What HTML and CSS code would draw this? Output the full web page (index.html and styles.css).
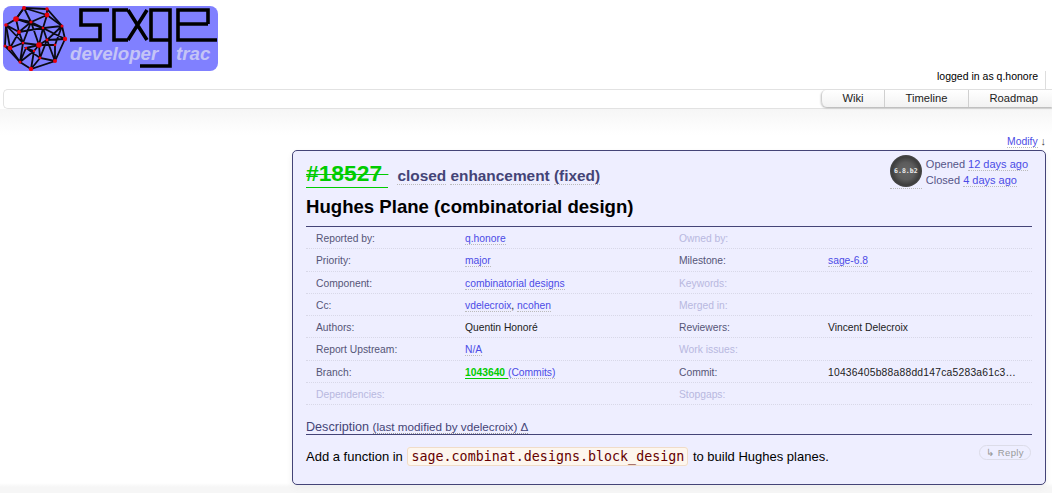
FILE: index.html
```html
<!DOCTYPE html>
<html lang="en">
  <head>
    <meta charset="UTF-8" />
    <title>#18527 (Hughes Plane (combinatorial design)) - Sage Trac</title>
    <link rel="stylesheet" href="styles.css">
  </head>
  <body>
    <div class="banner">
      <div class="logo">
        <svg class="logo-art" width="215" height="65" viewBox="3 6 215 65">
          <g fill="none" stroke="#0a0a14" stroke-width="1.8">
            <path d="M24 8 47 9 62 26 65 39 55 61 31 69 20 62 5 46 6 25 16 19Z" />
            <path d="M24 8 16 19 31 22 47 15 47 9M47 15 62 26 47 40 55 61M65 39 47 40 39 45 40 58 31 69M16 19 19 32 6 25M19 32 31 22 43 28 47 40M19 32 10 48 5 46M10 48 23 43 39 45M23 43 20 62M23 43 19 32M31 22 39 45 26 48 40 58 55 61M40 58 47 40M10 48 20 62 26 48M47 15 43 28 19 32M24 8 31 22M62 26 43 28 65 39M34 51 39 45M34 51 31 69M47 15 62 26M6 25 23 43M16 19 43 28M55 45 39 45M55 45 62 26M55 45 55 61M34 51 26 48M24 8 47 15M6 25 10 48M31 22 23 43M43 28 39 45M20 62 34 51" />
          </g>
          <g fill="#e8000c">
            <circle cx="24" cy="8" r="2" /><circle cx="47" cy="9" r="1.7" /><circle cx="16" cy="19" r="2.8" /><circle cx="47" cy="15" r="2.4" />
            <circle cx="6" cy="25" r="1.8" /><circle cx="31" cy="22" r="1.6" /><circle cx="62" cy="26" r="1.5" /><circle cx="19" cy="32" r="1.9" />
            <circle cx="43" cy="28" r="1.3" /><circle cx="65" cy="39" r="2.2" /><circle cx="47" cy="40" r="1.4" /><circle cx="39" cy="45" r="2.8" />
            <circle cx="55" cy="45" r="1.3" /><circle cx="5" cy="46" r="1.5" /><circle cx="10" cy="48" r="2.3" /><circle cx="23" cy="43" r="1.3" />
            <circle cx="26" cy="48" r="1.2" /><circle cx="34" cy="51" r="1.2" /><circle cx="40" cy="58" r="1.4" /><circle cx="55" cy="61" r="2" />
            <circle cx="20" cy="62" r="1.5" /><circle cx="31" cy="69" r="2.2" />
          </g>
          <path fill="none" stroke="#000" stroke-width="3.6" d="M70 40H100V25H81V10H109M128 10H114V40H128M128 10 147 40M147 10 128 40M170 40H151V10H170V66H140M208 24H178V10H208V24M178 24V40H217" />
        </svg>
        <span class="logo-dev">developer</span>
        <span class="logo-trac">trac</span>
      </div>
    </div>
    <div class="meta-line">
      <span class="login">logged in as q.honore</span>
    </div>
    <div class="mainnav">
      <ul class="nav-tabs">
        <li>Wiki</li>
        <li>Timeline</li>
        <li>Roadmap</li>
      </ul>
    </div>
    <div class="content">
      <div class="modify"><a href="#">Modify</a> <span class="arrow">↓</span></div>
      <div class="ticket">
        <div class="dates">
          <div class="badge-link">
            <div class="milestone-badge"><span>6.8.b2</span></div>
          </div>
          <div class="date-text">
            <div>Opened <a href="#">12 days ago</a></div>
            <div>Closed <a href="#">4 days ago</a></div>
          </div>
        </div>
        <h2 class="ticket-head">
          <a class="ticket-id" href="#">#18527&nbsp;</a>
          <span class="ticket-status"><span class="dot">closed</span> <span class="dot">enhancement</span> <span class="dot">(fixed)</span></span>
        </h2>
        <h2 class="summary">Hughes Plane (combinatorial design)</h2>
        <div class="props">
          <div class="prop-row">
            <span class="label">Reported by:</span><span class="value"><a href="#">q.honore</a></span>
            <span class="label empty">Owned by:</span><span class="value"></span>
          </div>
          <div class="prop-row">
            <span class="label">Priority:</span><span class="value"><a href="#">major</a></span>
            <span class="label">Milestone:</span><span class="value"><a href="#">sage-6.8</a></span>
          </div>
          <div class="prop-row">
            <span class="label">Component:</span><span class="value"><a href="#">combinatorial designs</a></span>
            <span class="label empty">Keywords:</span><span class="value"></span>
          </div>
          <div class="prop-row">
            <span class="label">Cc:</span><span class="value"><a href="#">vdelecroix</a>, <a href="#">ncohen</a></span>
            <span class="label empty">Merged in:</span><span class="value"></span>
          </div>
          <div class="prop-row">
            <span class="label">Authors:</span><span class="value">Quentin Honoré</span>
            <span class="label">Reviewers:</span><span class="value">Vincent Delecroix</span>
          </div>
          <div class="prop-row">
            <span class="label">Report Upstream:</span><span class="value"><a href="#">N/A</a></span>
            <span class="label empty">Work issues:</span><span class="value"></span>
          </div>
          <div class="prop-row">
            <span class="label">Branch:</span><span class="value"><a class="branch" href="#">1043640 </a><a href="#">(Commits)</a></span>
            <span class="label">Commit:</span><span class="value commit">10436405b88a88dd147ca5283a61c3…</span>
          </div>
          <div class="prop-row">
            <span class="label empty">Dependencies:</span><span class="value"></span>
            <span class="label empty">Stopgaps:</span><span class="value"></span>
          </div>
        </div>
        <h3 class="desc-head">
          <span class="desc-title">Description</span>
          <span class="desc-mod">(last modified by vdelecroix) Δ</span>
        </h3>
        <div class="desc-body">
          <p>Add a function in <code>sage.combinat.designs.block_design</code> to build Hughes planes.</p>
          <span class="reply">↳ Reply</span>
        </div>
      </div>
    </div>
  </body>
</html>
```
FILE: styles.css
```css
html, body {
  height: 100%;
}
body {
  margin: 0;
  overflow: hidden;
  background: #fff;
  color: #000;
  font-family: "Liberation Sans", Arial, sans-serif;
  font-size: 13px;
}
a {
  color: #4b4be6;
  text-decoration: none;
  border-bottom: 1px dotted #bbb;
}
.banner {
  padding: 6px 0 0 3px;
  height: 65px;
}
.logo {
  position: relative;
  width: 215px;
  height: 65px;
  background: #8080ff;
  border-radius: 8px;
}
.logo-art {
  display: block;
}
.logo-dev, .logo-trac {
  position: absolute;
  top: 37px;
  color: #c4c4f6;
  font-size: 18.7px;
  font-weight: bold;
  font-style: italic;
}
.logo-dev {
  left: 67px;
}
.logo-trac {
  left: 173px;
}
.meta-line {
  display: flex;
  justify-content: flex-end;
  height: 18px;
  font-size: 10.5px;
  line-height: 11px;
}
.login {
  padding-right: 7px;
  margin-right: 6px;
  border-right: 1px solid #ddd;
}
.mainnav {
  display: flex;
  justify-content: flex-end;
  box-sizing: border-box;
  height: 20px;
  margin-left: 3px;
  border: 1px solid #e2e2e2;
  border-right: none;
  border-radius: 5px 0 0 5px;
}
.nav-tabs {
  display: flex;
  margin: 0;
  padding: 0;
  list-style: none;
  font-size: 11.2px;
  line-height: 16px;
  color: #222;
  box-shadow: 0 1px 2px #aaa;
  border-radius: 5px 0 0 6px;
  height: 17px;
}
.nav-tabs li {
  padding: 0 20px;
  height: 17px;
  background: linear-gradient(#fff, #f2f2f2);
  border-left: 1px solid #d0d0d0;
  white-space: nowrap;
}
.nav-tabs li:first-child {
  border-radius: 5px 0 0 6px;
}
.nav-tabs li:nth-child(2) {
  padding: 0 21px;
}
.nav-tabs li:last-child {
  padding-right: 14px;
}
.content {
  box-sizing: border-box;
  padding: 26px 0 0 292px;
  height: 384px;
  background: linear-gradient(#f6f6f6 0, #fff 26px, #fff 374px, #f6f6f6 378px);
}
.modify {
  margin-right: 6px;
  text-align: right;
  font-size: 10.4px;
  line-height: 12px;
  color: #444;
}
.arrow {
  font-size: 11px;
}
.ticket {
  position: relative;
  box-sizing: border-box;
  width: 754px;
  height: 335px;
  margin-top: 2px;
  padding: 9px 13px 0;
  background: #eeeeff;
  border: 1px solid #444477;
  border-radius: 5px;
  box-shadow: 0 3px 6px #eee;
}
.dates {
  position: absolute;
  top: 4px;
  right: 17px;
  display: flex;
  gap: 4px;
  font-size: 11px;
  line-height: 16px;
  color: #555588;
}
.badge-link {
  padding-bottom: 1px;
  border-bottom: 1px dotted #bbb;
}
.milestone-badge {
  display: flex;
  align-items: center;
  justify-content: center;
  width: 32px;
  height: 32px;
  background: radial-gradient(circle, #666 0, #5c5c5c 38%, #3e3e3e 62%, #666 100%);
  border-radius: 50%;
  color: #eee;
  font-family: "DejaVu Sans Mono", monospace;
  font-size: 6.5px;
  font-weight: bold;
}
.date-text {
  padding-top: 1px;
}
.ticket-head {
  display: flex;
  align-items: baseline;
  margin: 0;
  height: 29px;
}
.ticket-id {
  color: #00cc00;
  font-size: 22.8px;
  font-weight: bold;
  text-decoration: line-through;
  text-decoration-thickness: 1px;
  border-bottom: 1px solid #00cc00;
  line-height: 27px;
}
.ticket-status {
  margin-left: 9px;
  color: #444477;
  font-size: 15.4px;
  font-weight: bold;
}
.dot {
  border-bottom: 1px dotted #bbb;
}
.summary {
  margin: 7px 0 0;
  padding-bottom: 9px;
  font-size: 18.6px;
  line-height: 21px;
  font-weight: bold;
}
.props {
  border-top: 1px solid #444477;
}
.prop-row {
  display: grid;
  grid-template-columns: 149px 214px 149px 1fr;
  height: 21.3px;
  padding-left: 10px;
  border-bottom: 1px dotted #d8d8e8;
  font-size: 10.3px;
  line-height: 24px;
  color: #222;
}
.commit {
  letter-spacing: 0.23px;
}
.label {
  color: #555577;
}
.label.empty {
  color: #b8b8e0;
}
.branch {
  color: #00cc00;
  font-weight: bold;
  border-bottom: 1px solid #00cc00;
}
.desc-head {
  margin: 13px 0 0;
  padding-top: 2px;
  border-bottom: 1px solid #444477;
  font-size: 12.6px;
  line-height: 14px;
  font-weight: normal;
  color: #444477;
}
.desc-title {
  border-bottom: 1px solid #444477;
}
.desc-mod {
  font-size: 11.7px;
  border-bottom: 1px dotted #999;
}
.desc-body {
  position: relative;
  margin-top: 13px;
}
.desc-body p {
  margin: 0;
  font-size: 13px;
  line-height: 17px;
}
code {
  padding: 1px 3px;
  margin: 0 1px;
  background: #fdf6ee;
  border: 1px solid #f0dcc8;
  border-radius: 3px;
  color: #660000;
  font-family: "DejaVu Sans Mono", monospace;
  font-size: 13.33px;
}
.reply {
  position: absolute;
  top: -3px;
  right: 1px;
  padding: 0 6px;
  border: 1px solid #dcdce8;
  border-radius: 8px;
  font-size: 9.5px;
  letter-spacing: 0.4px;
  line-height: 13px;
  color: #999;
}
```
